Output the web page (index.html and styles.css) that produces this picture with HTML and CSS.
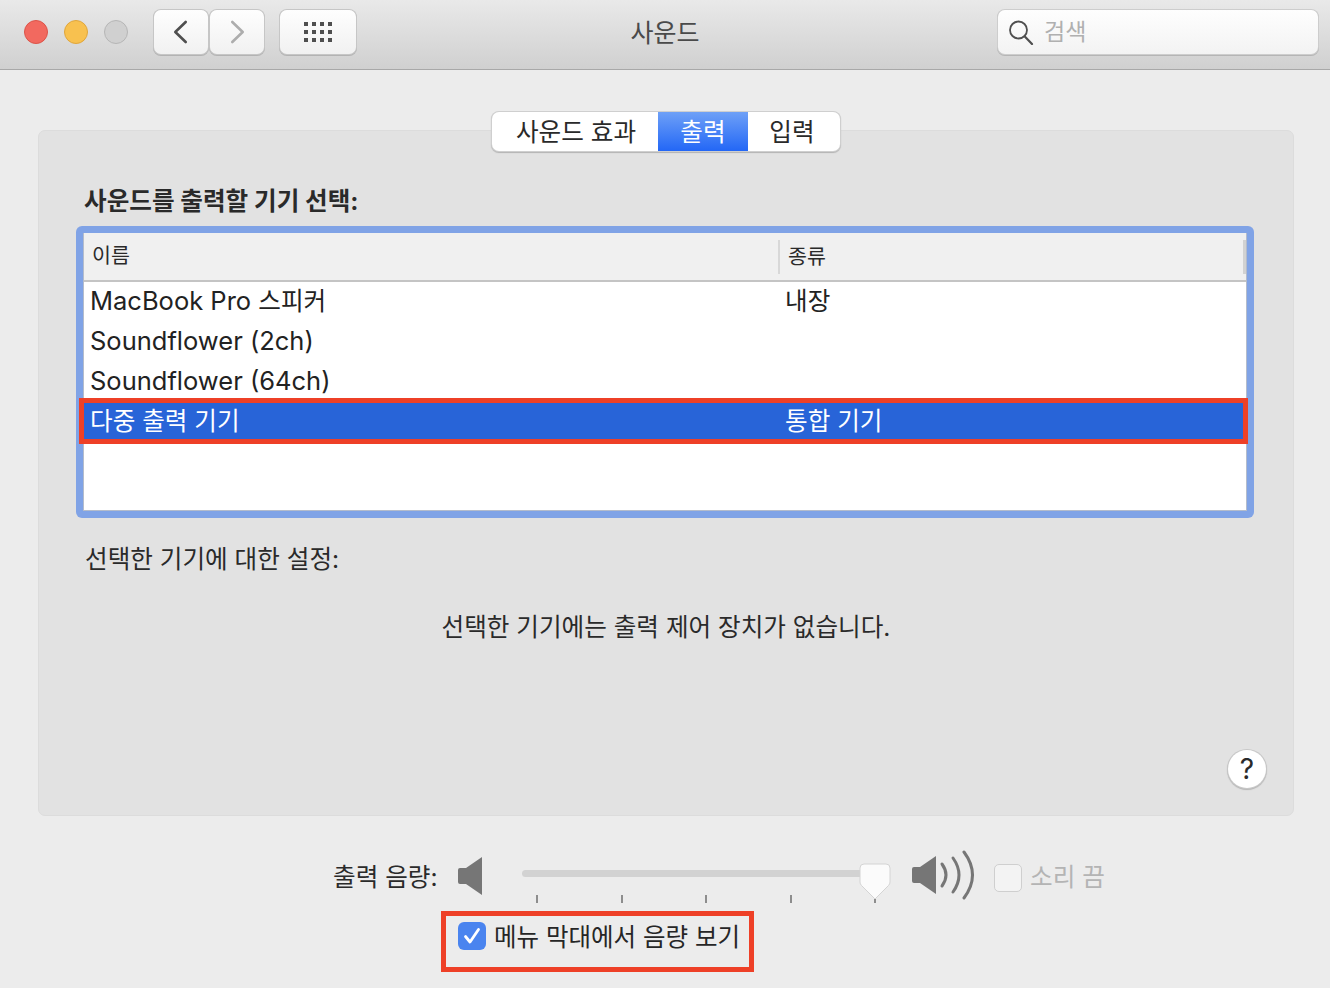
FILE: index.html
```html
<!DOCTYPE html>
<html lang="ko">
<head>
<meta charset="utf-8">
<title>사운드</title>
<link rel="stylesheet" href="styles.css">
</head>
<body>
<div class="window">
  <header class="toolbar">
    <div class="lights">
      <span class="light red"></span>
      <span class="light yellow"></span>
      <span class="light gray"></span>
    </div>
    <div class="nav">
      <button class="tbtn nav-btn"><svg width="18" height="26" viewBox="0 0 18 26"><path d="M13.700 3 L3.300 13 L13.700 23" fill="none" stroke="#4f4f4f" stroke-width="2.600" stroke-linecap="round" stroke-linejoin="round"/></svg></button>
      <button class="tbtn nav-btn"><svg width="18" height="26" viewBox="0 0 18 26"><path d="M4.300 3 L14.700 13 L4.300 23" fill="none" stroke="#adadad" stroke-width="2.600" stroke-linecap="round" stroke-linejoin="round"/></svg></button>
    </div>
    <button class="tbtn grid-btn"><svg width="28" height="20" viewBox="0 0 28 20" fill="#4f4f4f"><rect x="0" y="0" width="4" height="4"/><rect x="8" y="0" width="4" height="4"/><rect x="16" y="0" width="4" height="4"/><rect x="24" y="0" width="4" height="4"/><rect x="0" y="8" width="4" height="4"/><rect x="8" y="8" width="4" height="4"/><rect x="16" y="8" width="4" height="4"/><rect x="24" y="8" width="4" height="4"/><rect x="0" y="16" width="4" height="4"/><rect x="8" y="16" width="4" height="4"/><rect x="16" y="16" width="4" height="4"/><rect x="24" y="16" width="4" height="4"/></svg></button>
    <h1 class="title">사운드</h1>
    <div class="search">
      <svg width="26" height="26" viewBox="0 0 26 26"><circle cx="9.500" cy="11" r="8.500" fill="none" stroke="#4f4f4f" stroke-width="1.800"/><path d="M15.800 17.500 L23 25" stroke="#4f4f4f" stroke-width="2.200" stroke-linecap="round"/></svg>
      <span class="placeholder">검색</span>
    </div>
  </header>

  <main class="content">
    <section class="panel">
      <nav class="tabs">
        <span class="tab tab-a">사운드 효과</span>
        <span class="tab tab-b active">출력</span>
        <span class="tab tab-c">입력</span>
      </nav>
      <h2 class="heading">사운드를 출력할 기기 선택:</h2>
      <div class="table-ring">
        <div class="table">
          <div class="thead">
            <div class="th th-name">이름</div>
            <div class="th th-type">종류</div>
          </div>
          <div class="row"><span class="cell-name">MacBook Pro <span class="ko">스피커</span></span><span class="cell-type ko">내장</span></div>
          <div class="row"><span class="cell-name">Soundflower (2ch)</span><span class="cell-type"></span></div>
          <div class="row"><span class="cell-name">Soundflower (64ch)</span><span class="cell-type"></span></div>
          <div class="row selected"><span class="cell-name ko">다중 출력 기기</span><span class="cell-type ko">통합 기기</span></div>
        </div>
      </div>
      <p class="settings-label">선택한 기기에 대한 설정:</p>
      <p class="no-controls">선택한 기기에는 출력 제어 장치가 없습니다.</p>
      <div class="help-wrap"><span class="help">?</span></div>
    </section>

    <div class="volume">
      <span class="vol-label">출력 음량:</span>
      <svg class="spk-low" width="26" height="38" viewBox="0 0 26 38"><path d="M1 13 Q1 11 3 11 L9 11 L25 0 L25 38 L9 27 L3 27 Q1 27 1 25 Z" fill="#767676"/></svg>
      <div class="slider">
        <div class="track"></div>
        <div class="ticks"><i></i><i></i><i></i><i></i><i></i></div>
        <svg class="thumb" width="32" height="38" viewBox="0 0 32 38"><path d="M5 1 L27 1 Q31 1 31 5 L31 19 Q31 21 29.500 22.500 L16 36 L2.500 22.500 Q1 21 1 19 L1 5 Q1 1 5 1 Z" fill="#fbfbfb" stroke="#d4d4d4" stroke-width="1"/></svg>
      </div>
      <svg class="spk-high" width="64" height="50" viewBox="0 0 64 50"><path d="M1 19 Q1 17 3 17 L9 17 L25 6 L25 44 L9 33 L3 33 Q1 33 1 31 Z" fill="#767676"/><path d="M31 14 Q39 25 31 36" fill="none" stroke="#767676" stroke-width="3" stroke-linecap="round"/><path d="M42 8 Q54 25 42 42" fill="none" stroke="#767676" stroke-width="3" stroke-linecap="round"/><path d="M53 2 Q70 25 53 48" fill="none" stroke="#767676" stroke-width="3" stroke-linecap="round"/></svg>
      <span class="mute-box"></span>
      <span class="mute-label">소리 끔</span>
    </div>

    <div class="menubar-row">
      <span class="check"><svg width="20" height="20" viewBox="0 0 20 20"><path d="M3.500 10.500 L8 16 L16.500 3.500" fill="none" stroke="#fff" stroke-width="2.800" stroke-linecap="round" stroke-linejoin="round"/></svg></span>
      <span class="check-label">메뉴 막대에서 음량 보기</span>
    </div>
  </main>

  <div class="mark mark-row"></div>
  <div class="mark mark-check"></div>
</div>
</body>
</html>
```

FILE: styles.css
```css
* { box-sizing: border-box; }
html, body { margin: 0; padding: 0; }
body {
  width: 1330px;
  height: 988px;
  overflow: hidden;
  background: #ececec;
  font-family: "Inter", "Noto Sans CJK KR", sans-serif;
  color: #262626;
}
.window { position: relative; width: 1330px; height: 988px; }

.toolbar {
  position: relative;
  height: 70px;
  display: flex;
  align-items: flex-start;
  background: linear-gradient(#e9e9e9, #d0d0d0);
  border-bottom: 1px solid #a8a8a8;
}
.lights { display: flex; gap: 16px; margin: 20px 0 0 24px; }
.light { width: 24px; height: 24px; border-radius: 50%; border: 1px solid; }
.red { background: #f2695f; border-color: #dc5449; }
.yellow { background: #f8c14f; border-color: #e0a63c; }
.gray { background: #d0d0d0; border-color: #b6b6b6; }

.tbtn {
  display: flex;
  align-items: center;
  justify-content: center;
  padding: 0;
  height: 44px;
  border: 0;
  border-radius: 7px;
  background: linear-gradient(#fefefe, #f1f1f1);
  box-shadow: 0 0 0 1px #c6c6c6, 0 1px 0 1px #b3b3b3;
}
.nav { display: flex; gap: 2px; margin: 10px 0 0 26px; }
.nav-btn { width: 54px; }
.grid-btn { width: 76px; margin: 10px 0 0 16px; }
.title {
  position: absolute;
  left: 0;
  right: 0;
  top: 16px;
  margin: 0;
  text-align: center;
  font-size: 25px;
  line-height: 34px;
  font-weight: 400;
  color: #4a4a4a;
}
.search {
  display: flex;
  align-items: center;
  gap: 9px;
  width: 320px;
  height: 44px;
  margin: 10px 12px 0 auto;
  padding-left: 11px;
  background: linear-gradient(#fefefe, #f3f3f3);
  border-radius: 7px;
  box-shadow: 0 0 0 1px #cdcdcd, 0 1px 0 1px #b5b5b5;
}
.placeholder { font-size: 23px; line-height: 34px; color: #b0b0b0; }

.content { padding: 60px 36px 0 38px; }
.panel {
  height: 686px;
  padding: 0 39px 0 37px;
  background: #e2e2e2;
  border: 1px solid #dcdcdc;
  border-radius: 7px;
}
.tabs {
  display: flex;
  width: 348px;
  height: 39px;
  margin: -19px 0 0 416px;
  background: #fff;
  border-radius: 7px;
  overflow: hidden;
  box-shadow: 0 0 0 1px #cfcfcf, 0 1px 1px 1px #b3b3b3;
}
.tab {
  display: flex;
  align-items: center;
  justify-content: center;
  font-size: 24.600px;
  color: #2a2a2a;
  height: 39px;
  padding-bottom: 3px;
}
.tab-a { width: 166px; padding-left: 2px; }
.tab-b { width: 90px; }
.tab-c { width: 92px; padding-right: 4px; }
.tab.active { color: #fff; background: linear-gradient(#6ea0f7, #2367f6); }

.heading {
  margin: 30px 0 0 8px;
  height: 40px;
  font-size: 24.600px;
  line-height: 40px;
  font-weight: 700;
  color: #2a2a2a;
}
.table-ring {
  width: 1178px;
  height: 292px;
  margin-top: 5px;
  padding: 7px;
  background: #80a3e6;
  border-radius: 6px;
}
.table {
  height: 278px;
  background: #fff;
  border: 1px solid #b4bccb;
  border-top: 0;
}
.thead {
  display: flex;
  height: 49px;
  background: #f0f0f0;
  border-bottom: 2px solid #c4c4c4;
}
.th { font-size: 20.600px; line-height: 46px; color: #2a2a2a; }
.th-name { width: 694px; padding-left: 8px; }
.th-type {
  flex: 1;
  height: 34px;
  line-height: 34px;
  margin-top: 7px;
  padding-left: 8px;
  border-left: 2px solid #d8d8d8;
  border-right: 3px solid #d2d2d2;
}
.row {
  display: flex;
  height: 40px;
  font-size: 25.500px;
  line-height: 38px;
  color: #222;
}
.ko { font-size: 24.600px; }
.cell-name { width: 701px; padding-left: 6px; }
.cell-type { flex: 1; }
.row.selected { background: #2864d8; color: #fff; }

.settings-label {
  margin: 23px 0 0 9px;
  height: 36px;
  font-size: 24.600px;
  line-height: 36px;
  color: #2a2a2a;
}
.no-controls {
  margin: 32px 0 0 2px;
  height: 36px;
  text-align: center;
  font-size: 24.600px;
  line-height: 36px;
  color: #2a2a2a;
}
.help-wrap { display: flex; justify-content: flex-end; margin-top: 105px; margin-right: -12px; }
.help {
  display: flex;
  align-items: center;
  justify-content: center;
  width: 38px;
  height: 38px;
  border-radius: 50%;
  background: #fff;
  box-shadow: 0 0 0 1px #c8c8c8, 0 1px 1px 1px #b5b5b5;
  font-size: 28px;
  font-weight: 400;
  color: #2a2a2a;
}

.volume {
  display: flex;
  align-items: flex-start;
  height: 72px;
  margin-top: 26px;
  padding-left: 295px;
}
.vol-label { width: 124px; font-size: 24.600px; line-height: 36px; margin-top: 17px; color: #2a2a2a; }
.spk-low { margin-top: 15px; }
.slider { position: relative; width: 362px; margin-left: 39px; height: 60px; }
.track { width: 342px; height: 7px; margin-top: 28px; border-radius: 4px; background: #d2d2d2; }
.ticks { display: flex; justify-content: space-between; width: 340px; margin: 18px 0 0 14px; }
.ticks i { display: block; width: 2px; height: 8px; background: #8d8d8d; }
.thumb { position: absolute; left: 337px; top: 21px; }
.spk-high { margin: 8px 0 0 27px; }
.mute-box {
  width: 28px;
  height: 28px;
  margin: 22px 0 0 19px;
  border-radius: 5px;
  background: #f3f3f3;
  border: 1px solid #cfcfcf;
}
.mute-label { margin: 17px 0 0 8px; font-size: 24.600px; line-height: 36px; color: #b4b4b4; }

.menubar-row {
  display: flex;
  align-items: center;
  height: 36px;
  margin-top: 4px;
  padding-left: 420px;
}
.check {
  display: flex;
  align-items: center;
  justify-content: center;
  width: 28px;
  height: 28px;
  border-radius: 6px;
  background: #4a84ef;
}
.check-label { margin-left: 8px; padding-top: 2px; font-size: 24.500px; line-height: 36px; color: #262626; }

.mark { position: absolute; border: 5px solid #ee4027; }
.mark-row { left: 79px; top: 398px; width: 1169px; height: 46px; }
.mark-check { left: 441px; top: 911px; width: 313px; height: 61px; }
```
